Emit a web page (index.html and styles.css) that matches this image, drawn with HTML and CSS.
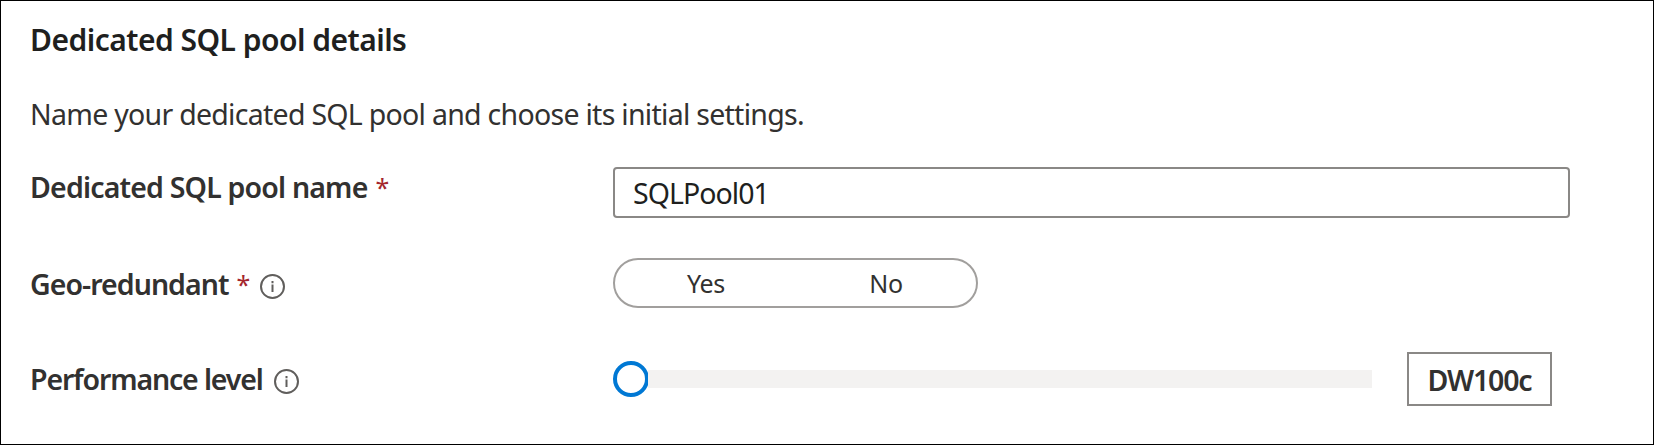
FILE: index.html
```html
<!DOCTYPE html>
<html lang="en">
<head>
<meta charset="utf-8">
<title>Dedicated SQL pool details</title>
<link rel="stylesheet" href="styles.css">
</head>
<body>
<main class="panel">
  <h1 class="title"><span>Dedicated SQL pool details</span></h1>
  <p class="intro"><span>Name your dedicated SQL pool and choose its initial settings.</span></p>
  <form class="form">
    <div class="row row-name">
      <label class="label" for="pool"><span class="label-name">Dedicated SQL pool name</span><span class="required">*</span></label>
      <input class="text-input" id="pool" type="text" value="SQLPool01">
    </div>
    <div class="row row-geo">
      <div class="label"><span class="label-geo">Geo-redundant</span><span class="required">*</span>
        <svg class="info info-geo" viewBox="0 0 25 25"><circle cx="12.5" cy="12.5" r="11.5"/><path d="M12.5 10.5v7.5M12.5 7v2.2"/></svg>
      </div>
      <div class="toggle"><span class="option">Yes</span><span class="option">No</span></div>
    </div>
    <div class="row row-perf">
      <div class="label"><span class="label-perf">Performance level</span>
        <svg class="info info-perf" viewBox="0 0 25 25"><circle cx="12.5" cy="12.5" r="11.5"/><path d="M12.5 10.5v7.5M12.5 7v2.2"/></svg>
      </div>
      <div class="slider"><span class="thumb"></span><span class="track"></span></div>
      <output class="level"><span>DW100c</span></output>
    </div>
  </form>
</main>
</body>
</html>
```
FILE: styles.css
```css
* { box-sizing: border-box; }
body {
  margin: 0;
  background: #fff;
  color: #323130;
  font-family: "Noto Sans", "Open Sans", sans-serif;
  font-size: 28.5px;
}
.panel {
  width: 1654px;
  height: 445px;
  border: 1px solid #000;
  padding: 19px 0 0 29px;
  overflow: hidden;
}
.title {
  margin: 0;
  height: 40px;
  line-height: 40px;
  font-size: 30px;
  font-weight: 600;
  color: #201f1e;
  letter-spacing: -0.52px;
  white-space: nowrap;
}
.intro {
  margin: 34px 0 0;
  height: 40px;
  line-height: 40px;
  letter-spacing: -0.72px;
  white-space: nowrap;
}
.form { margin: 33px 0 0; }
.row { display: flex; align-items: flex-start; }
.row-geo { margin-top: 40px; }
.row-perf { margin-top: 44px; }
.label {
  display: flex;
  width: 583px;
  height: 40px;
  line-height: 40px;
  font-weight: 600;
  letter-spacing: -0.82px;
  white-space: nowrap;
}
.label-geo { letter-spacing: -0.96px; }
.label-perf { letter-spacing: -1.15px; }
.row-geo .label { margin-top: 6px; }
.row-perf .label { margin-top: 7px; }
.required {
  margin-left: 8px;
  color: #a4262c;
  font-size: 25px;
  font-weight: 400;
}
.info {
  width: 25px;
  height: 25px;
  margin: 10px 0 0 10px;
  fill: none;
  stroke: #605e5c;
  stroke-width: 2;
}
.info-perf { margin-left: 11px; }
.text-input {
  width: 957px;
  height: 51px;
  padding: 0 18px;
  border: 2px solid #8a8886;
  border-radius: 4px;
  outline: 0;
  background: #fff;
  color: #201f1e;
  font: inherit;
  letter-spacing: -0.95px;
}
.toggle {
  display: flex;
  width: 365px;
  height: 50px;
  padding: 0 0 0 1px;
  border: 2px solid #a19f9d;
  border-radius: 25px;
  line-height: 47px;
  font-size: 25px;
  letter-spacing: -0.4px;
}
.option { width: 180px; text-align: center; }
.slider {
  display: flex;
  align-items: center;
  width: 759px;
  height: 36px;
  margin-top: 9px;
}
.thumb {
  width: 36px;
  height: 36px;
  border: 4px solid #0078d4;
  border-radius: 50%;
}
.track { flex: 1; height: 18px; margin-left: -1px; background: #f3f2f1; }
.level {
  width: 145px;
  height: 54px;
  margin-left: 35px;
  border: 2px solid #8a8886;
  line-height: 52px;
  font-weight: 600;
  text-align: center;
  letter-spacing: -1.15px;
}
```
